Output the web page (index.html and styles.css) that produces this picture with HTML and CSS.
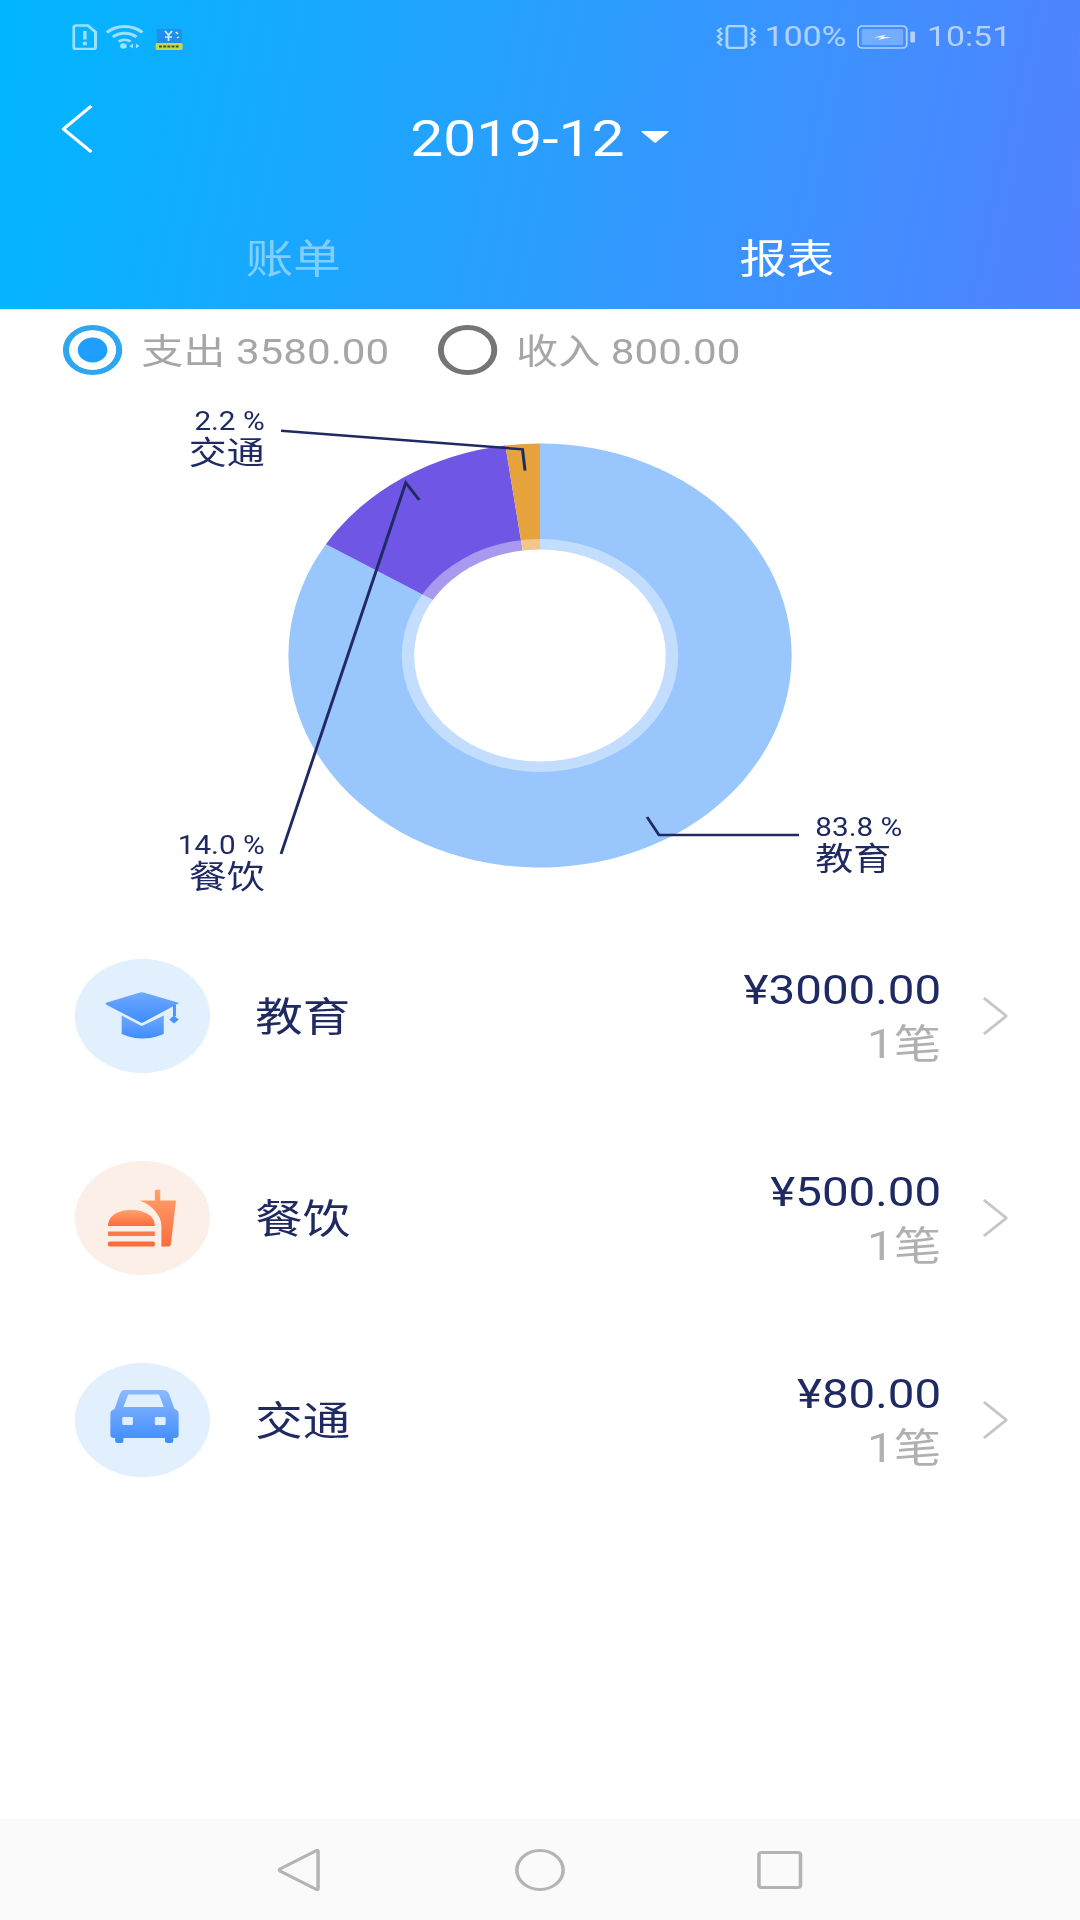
FILE: index.html
```html
<!DOCTYPE html>
<html lang="zh-CN">
  <head>
    <meta charset="UTF-8" />
    <meta name="viewport" content="width=device-width, initial-scale=1.0" />
    <title>报表</title>
    <link rel="stylesheet" href="styles.css">
  </head>
  <body>
    <div class="app">
      <header class="header">
        <!-- Status bar -->
        <div class="statusBar">
          <div class="statusGroup">
            <svg class="iconSim" viewBox="0 0 21 26">
              <path d="M3 1.500h10l6.500 6.500v15a2 2 0 0 1-2 2h-14.500a2 2 0 0 1-2-2v-19.500a2 2 0 0 1 2-2z" fill="none" stroke="currentColor" stroke-width="2.600" />
              <path d="M10.500 7v8.500" stroke="currentColor" stroke-width="3" />
              <circle cx="10.500" cy="19.500" r="1.900" fill="currentColor" />
            </svg>
            <svg class="iconWifi" viewBox="0 0 32 25">
              <path d="M1 8.500c8.500-8 21.500-8 30 0M6 13c5.800-5 14.200-5 20 0M11 17.500c3-2.300 7-2.300 10 0" fill="none" stroke="currentColor" stroke-width="2.800" />
              <circle cx="15" cy="22" r="2.800" fill="currentColor" />
              <path d="M23 19.500v5l-3-2.500zM25.500 19.500v5l3-2.500z" fill="currentColor" />
            </svg>
            <svg class="iconApp" viewBox="0 0 23 21">
              <rect x="1" y="0" width="21" height="14" fill="#1f8fef" />
              <path d="M8 2l3 4 3-4M11 6v6M8 8h6" fill="none" stroke="#cfeaff" stroke-width="1.500" />
              <path d="M17 3l2 2M18 9l2-1" stroke="#dff2c0" stroke-width="1.200" />
              <rect x="0" y="14" width="23" height="7" rx="1.500" fill="#c2d94e" />
              <path d="M3 17.500h17" stroke="#3f5a2a" stroke-width="2" stroke-dasharray="2.500 1" />
            </svg>
          </div>
          <div class="statusGroup statusRight">
            <svg class="iconVibrate" viewBox="0 0 35 24">
              <rect x="9.500" y="1" width="16" height="22" rx="2.500" fill="none" stroke="currentColor" stroke-width="2.400" />
              <path d="M5 3l-3 2.500 3 3-3 3 3 3-3 3 3 3M30 3l3 2.500-3 3 3 3-3 3 3 3-3 3" fill="none" stroke="currentColor" stroke-width="2" />
            </svg>
            <span class="statusText batteryText">100%</span>
            <svg class="iconBattery" viewBox="0 0 50 24">
              <rect x="1" y="1" width="41" height="22" rx="3.500" fill="none" stroke="currentColor" stroke-width="1.500" />
              <rect x="4" y="4" width="35" height="16" rx="1.500" fill="currentColor" opacity="0.45" />
              <path d="M14 12.500l11-3-3 2.500 7 0-11 3 3-2.500z" fill="#fff" opacity="0.9" />
              <rect x="45" y="6.500" width="4" height="11" rx="1" fill="currentColor" />
            </svg>
            <span class="statusText">10:51</span>
          </div>
        </div>

        <div class="titleRow">
          <svg class="backIcon" viewBox="0 0 26 48">
            <path d="M25 1L1.500 24 25 47" fill="none" stroke="#fff" stroke-width="3" />
          </svg>
          <div class="monthPicker">
            <span class="monthText">2019-12</span>
            <svg class="caretIcon" viewBox="0 0 24 12">
              <path d="M1 0h22q1 0 .3 1L13 11.300q-1 .9-2 0L.7 1Q0 0 1 0z" fill="#fff" />
            </svg>
          </div>
        </div>

        <div class="tabs">
          <div class="tab">账单</div>
          <div class="tab active">报表</div>
        </div>
      </header>

      <!-- Expense / income switch -->
      <div class="typeRow">
        <div class="typeItem">
          <span class="radio checked"></span>
          <span class="typeText">支出 3580.00</span>
        </div>
        <div class="typeItem">
          <span class="radio"></span>
          <span class="typeText">收入 800.00</span>
        </div>
      </div>

      <!-- Donut chart -->
      <div class="chart">
        <svg class="chartSvg" viewBox="0 0 910 525">
          <path d="M455 265.500V53.500A212 212 0 1 1 274.600 154.200Z" fill="#99c6fd" />
          <path d="M455 265.500L274.600 154.200A212 212 0 0 1 425.800 55.500Z" fill="#7056e4" />
          <path d="M455 265.500L425.800 55.500A212 212 0 0 1 455 53.500Z" fill="#e6a33c" />
          <circle cx="455" cy="265.500" r="116.500" fill="#fff" opacity="0.4" />
          <circle cx="455" cy="265.500" r="106" fill="#fff" />
          <g fill="none" stroke="#1f2a63" stroke-width="2.500">
            <path d="M236.800 40.700L440.300 59.300 442.400 80.700" />
            <path d="M236.800 464L341.900 92.700 353.300 110" />
            <path d="M673.200 445H555.300L545.200 427" />
          </g>
        </svg>
        <div class="chartLabel labelLeft labelTraffic">
          <div class="labelPct">2.2 %</div>
          <div class="labelName">交通</div>
        </div>
        <div class="chartLabel labelLeft labelFood">
          <div class="labelPct">14.0 %</div>
          <div class="labelName">餐饮</div>
        </div>
        <div class="chartLabel labelEdu">
          <div class="labelPct">83.8 %</div>
          <div class="labelName">教育</div>
        </div>
      </div>

      <!-- Category list -->
      <div class="list">
        <div class="row">
          <div class="catIcon catBlue">
            <svg viewBox="0 0 114 114">
              <defs>
                <linearGradient id="blueFill" x1="0" y1="0" x2="0" y2="1">
                  <stop offset="0" stop-color="#6fa9ff" />
                  <stop offset="1" stop-color="#3f8cff" />
                </linearGradient>
                <linearGradient id="carFill" x1="0" y1="0" x2="0" y2="1">
                  <stop offset="0" stop-color="#8cbaff" />
                  <stop offset="1" stop-color="#3f8cff" />
                </linearGradient>
                <linearGradient id="orangeFill" x1="0" y1="0" x2="0" y2="1">
                  <stop offset="0" stop-color="#ffa26b" />
                  <stop offset="1" stop-color="#fb6c3e" />
                </linearGradient>
              </defs>
              <path d="M27 43.500L55 33.500q1.500-.5 3 0L88 44 57.500 63.500q-1 .5-2 0L27 46q-2-1.500 0-2.500z" fill="url(#blueFill)" />
              <path d="M39.500 56.500L55.500 66.500q1 .5 2 0L75 56.500V75q-18 9-35.500 0z" fill="url(#blueFill)" />
              <path d="M84 46v11" stroke="#4a92ff" stroke-width="2.500" />
              <path d="M83.600 56.500l4 4-4 4-4-4z" fill="#4a92ff" />
            </svg>
          </div>
          <div class="catName">教育</div>
          <div class="amountBlock">
            <div class="amount">¥3000.00</div>
            <div class="count">1笔</div>
          </div>
          <svg class="chevron" viewBox="0 0 21 38">
            <path d="M1 1l19 18L1 37" fill="none" stroke="#c6c6c6" stroke-width="2.500" />
          </svg>
        </div>

        <div class="row">
          <div class="catIcon catOrange">
            <svg viewBox="0 0 114 114">
              <path d="M28 65c0-10 8-16 19.500-16S67.500 55 67.500 65z" fill="url(#orangeFill)" />
              <rect x="28" y="70.500" width="39.500" height="4.500" fill="#fb7a4a" />
              <rect x="28" y="80.500" width="39.500" height="5" rx="1.500" fill="#fb6c3e" />
              <path d="M55 39.400h12.500V28.700h4.500v10.700h13.300L81 83q-.3 2.600-3 2.600h-5V65c0-11-8-21-18-25.600z" fill="url(#orangeFill)" />
            </svg>
          </div>
          <div class="catName">餐饮</div>
          <div class="amountBlock">
            <div class="amount">¥500.00</div>
            <div class="count">1笔</div>
          </div>
          <svg class="chevron" viewBox="0 0 21 38">
            <path d="M1 1l19 18L1 37" fill="none" stroke="#c6c6c6" stroke-width="2.500" />
          </svg>
        </div>

        <div class="row">
          <div class="catIcon catBlue">
            <svg viewBox="0 0 114 114">
              <path d="M42 27h32q4 0 5.500 4L84 46q3.500 1 3.500 5v21q0 3-3 3h-1.500v3q0 2-2 2h-3q-2 0-2-2v-3H41v3q0 2-2 2h-3q-2 0-2-2v-3h-1q-3 0-3-3V51q0-4 3.500-5L38 31q1.500-4 4-4z" fill="url(#carFill)" />
              <path d="M45 31.500h26l4 12.500H41z" fill="#e2f0fd" />
              <rect x="40" y="54" width="9" height="8" rx="1" fill="#e2f0fd" />
              <rect x="67.500" y="54" width="9" height="8" rx="1" fill="#e2f0fd" />
            </svg>
          </div>
          <div class="catName">交通</div>
          <div class="amountBlock">
            <div class="amount">¥80.00</div>
            <div class="count">1笔</div>
          </div>
          <svg class="chevron" viewBox="0 0 21 38">
            <path d="M1 1l19 18L1 37" fill="none" stroke="#c6c6c6" stroke-width="2.500" />
          </svg>
        </div>
      </div>

      <!-- Android navigation bar -->
      <nav class="navBar">
        <svg class="navIcon" viewBox="0 0 42 42">
          <path d="M36 2.500v37q0 1.700-1.700.8L4.300 22.300q-1.800-1.300 0-2.600L34.300 1.700q1.700-.9 1.700.8z" fill="none" stroke="#b4b4b4" stroke-width="3" />
        </svg>
        <svg class="navIcon" viewBox="0 0 42 42">
          <circle cx="21" cy="21" r="19.500" fill="none" stroke="#b4b4b4" stroke-width="3" />
        </svg>
        <svg class="navIcon" viewBox="0 0 42 42">
          <rect x="3.500" y="3.500" width="35" height="35" rx="2" fill="none" stroke="#b4b4b4" stroke-width="3" />
        </svg>
      </nav>
    </div>
  </body>
</html>
```

FILE: styles.css
```css
* {
  margin: 0;
  padding: 0;
  box-sizing: border-box;
}

body {
  background-color: #ffffff;
  overflow: hidden;
  font-family: Roboto, "Noto Sans CJK SC", sans-serif;
}

/* The screen is 910 wide and stretched out to fill the 1080 window */
.app {
  width: 910px;
  height: 1920px;
  display: flex;
  flex-direction: column;
  transform: scaleX(1.1868);
  transform-origin: 0 0;
}

/* Header */
.header {
  height: 309px;
  background: linear-gradient(100deg, #00b6ff 0%, #2a9eff 50%, #5282ff 100%);
  flex-shrink: 0;
}

.statusBar {
  height: 72px;
  padding: 1px 58px 0 61px;
  display: flex;
  align-items: center;
  justify-content: space-between;
  color: rgba(255, 255, 255, 0.6);
}

.statusGroup {
  display: flex;
  align-items: center;
  gap: 7px;
}

.statusRight {
  gap: 9px;
}

.statusText {
  font-size: 28.500px;
  line-height: 32px;
}

.batteryText {
  margin-left: -3px;
}

.iconSim {
  width: 21px;
  height: 26px;
}

.iconWifi {
  width: 32px;
  height: 25px;
}

.iconApp {
  width: 23px;
  height: 21px;
  margin-left: 3px;
  margin-top: 5px;
}

.iconVibrate {
  width: 35px;
  height: 24px;
}

.iconBattery {
  width: 50px;
  height: 24px;
}

.titleRow {
  height: 130px;
  position: relative;
  display: flex;
  align-items: center;
  justify-content: center;
}

.backIcon {
  position: absolute;
  left: 52px;
  top: 33px;
  width: 26px;
  height: 48px;
}

.monthPicker {
  display: flex;
  align-items: center;
  gap: 14px;
}

.monthText {
  font-size: 49.500px;
  line-height: 60px;
  padding-top: 3px;
  color: #ffffff;
}

.caretIcon {
  width: 24px;
  height: 12px;
}

.tabs {
  width: 832px;
  height: 98px;
  margin: 9px auto 0;
  display: flex;
}

.tab {
  flex: 1;
  font-size: 40px;
  line-height: 98px;
  text-align: center;
  color: rgba(255, 255, 255, 0.45);
}

.tab.active {
  color: #ffffff;
}

/* Expense / income switch */
.typeRow {
  height: 81px;
  padding-left: 53px;
  display: flex;
  align-items: center;
  gap: 41px;
  flex-shrink: 0;
}

.typeItem {
  display: flex;
  align-items: center;
  gap: 16px;
}

.radio {
  width: 50px;
  height: 50px;
  border: 5px solid #757575;
  border-radius: 50%;
  background-color: #ffffff;
}

.radio.checked {
  border-color: #2fa6f0;
  background-color: #1e9fff;
  box-shadow: inset 0 0 0 7.500px #ffffff;
}

.typeText {
  font-size: 35.500px;
  line-height: 42px;
  padding-top: 4px;
  color: #a6a6a6;
}

/* Donut chart */
.chart {
  position: relative;
  height: 525px;
  flex-shrink: 0;
}

.chartSvg {
  display: block;
  width: 910px;
  height: 525px;
}

.chartLabel {
  position: absolute;
  color: #1f2a63;
}

.labelLeft {
  right: 687px;
  text-align: right;
}

.labelTraffic {
  top: 18px;
}

.labelFood {
  top: 442px;
}

.labelEdu {
  left: 687px;
  top: 424px;
}

.labelPct {
  font-size: 25px;
  line-height: 28px;
}

.labelName {
  font-size: 32px;
  line-height: 34px;
}

/* Category list */
.list {
  flex-shrink: 0;
}

.row {
  height: 202px;
  padding: 0 61px 0 63px;
  display: flex;
  align-items: center;
}

.catIcon {
  width: 114px;
  height: 114px;
  border-radius: 50%;
  flex-shrink: 0;
}

.catIcon svg {
  display: block;
  width: 114px;
  height: 114px;
}

.catBlue {
  background-color: #e2f0fd;
}

.catOrange {
  background-color: #fbefe8;
}

.catName {
  margin-left: 38px;
  margin-bottom: 4px;
  font-size: 40px;
  color: #1f2a63;
}

.amountBlock {
  margin-left: auto;
  padding-top: 6px;
  text-align: right;
}

.amount {
  font-size: 40px;
  line-height: 52px;
  color: #1f2a63;
}

.count {
  font-size: 40px;
  line-height: 56px;
  color: #b0b0b0;
}

.chevron {
  width: 21px;
  height: 38px;
  margin-left: 35px;
  flex-shrink: 0;
}

/* Navigation bar */
.navBar {
  height: 101px;
  margin-top: auto;
  background-color: #fafafa;
  display: flex;
  align-items: center;
  justify-content: center;
  gap: 160px;
}

.navIcon {
  width: 42px;
  height: 42px;
}
```
